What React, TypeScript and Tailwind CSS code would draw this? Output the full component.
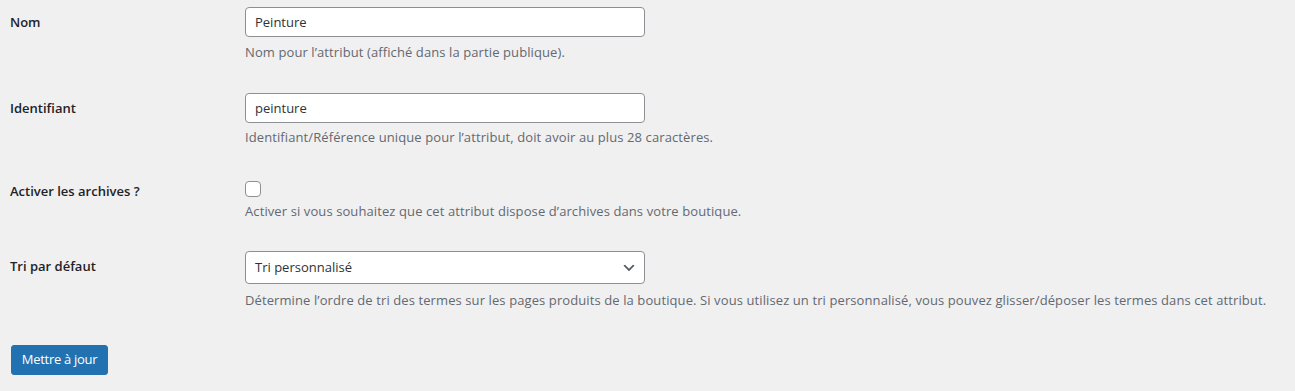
import React from 'react';

const font = { fontFamily: '"Segoe UI", "Open Sans", "Liberation Sans", Arial, sans-serif' };

function Row({
  label,
  labelClass,
  children,
  description,
  descClass,
}: {
  label: string;
  labelClass: string;
  children: React.ReactNode;
  description: string;
  descClass: string;
}) {
  return (
    <div className="flex">
      <div className={`w-[245px] shrink-0 pl-[10px] text-[13px] font-semibold text-[#1d2327] ${labelClass}`}>
        {label}
      </div>
      <div className="flex-1">
        {children}
        <p className={`text-[13px] leading-[20px] tracking-[0.1px] text-[#646970] ${descClass}`}>{description}</p>
      </div>
    </div>
  );
}

export default function App() {
  return (
    <div className="min-h-[391px] w-full bg-[#f0f0f1] pt-[7px]" style={font}>
      <Row
        label="Nom"
        labelClass="leading-[30px]"
        description="Nom pour l’attribut (affiché dans la partie publique)."
        descClass="mt-[5px]"
      >
        <input
          defaultValue="Peinture"
          className="block h-[30px] w-[400px] rounded-[4px] border border-[#8c8f94] bg-white px-[9px] text-[13px] text-[#2c3338] outline-none"
          style={font}
        />
      </Row>

      <div className="h-[31px]" />

      <Row
        label="Identifiant"
        labelClass="leading-[30px]"
        description="Identifiant/Référence unique pour l’attribut, doit avoir au plus 28 caractères."
        descClass="mt-[4px]"
      >
        <input
          defaultValue="peinture"
          className="block h-[30px] w-[400px] rounded-[4px] border border-[#8c8f94] bg-white px-[9px] text-[13px] text-[#2c3338] outline-none"
          style={font}
        />
      </Row>

      <div className="h-[34px]" />

      <Row
        label="Activer les archives ?"
        labelClass="leading-[20px]"
        description="Activer si vous souhaitez que cet attribut dispose d’archives dans votre boutique."
        descClass="mt-[4px]"
      >
        <div className="h-[16px] w-[16px] rounded-[4px] border border-[#8c8f94] bg-white" />
      </Row>

      <div className="h-[30px]" />

      <Row
        label="Tri par défaut"
        labelClass="leading-[30px]"
        description="Détermine l’ordre de tri des termes sur les pages produits de la boutique. Si vous utilisez un tri personnalisé, vous pouvez glisser/déposer les termes dans cet attribut."
        descClass="mt-[6px]"
      >
        <div className="flex h-[33px] w-[400px] items-center justify-between rounded-[4px] border border-[#8c8f94] bg-white pl-[9px] pr-[7px] text-[13px] text-[#2c3338]">
          <span>Tri personnalisé</span>
          <svg width="16" height="16" viewBox="0 0 20 20" fill="#50575e">
            <path d="M5 6l5 5 5-5 2 1-7 7-7-7z" />
          </svg>
        </div>
      </Row>

      <div className="h-[35px]" />

      <div className="pl-[11px]">
        <button className="h-[30px] w-[97px] rounded-[3px] border border-[#2271b1] bg-[#2271b1] text-[13px] tracking-[-0.3px] text-white">
          Mettre à jour
        </button>
      </div>
    </div>
  );
}
